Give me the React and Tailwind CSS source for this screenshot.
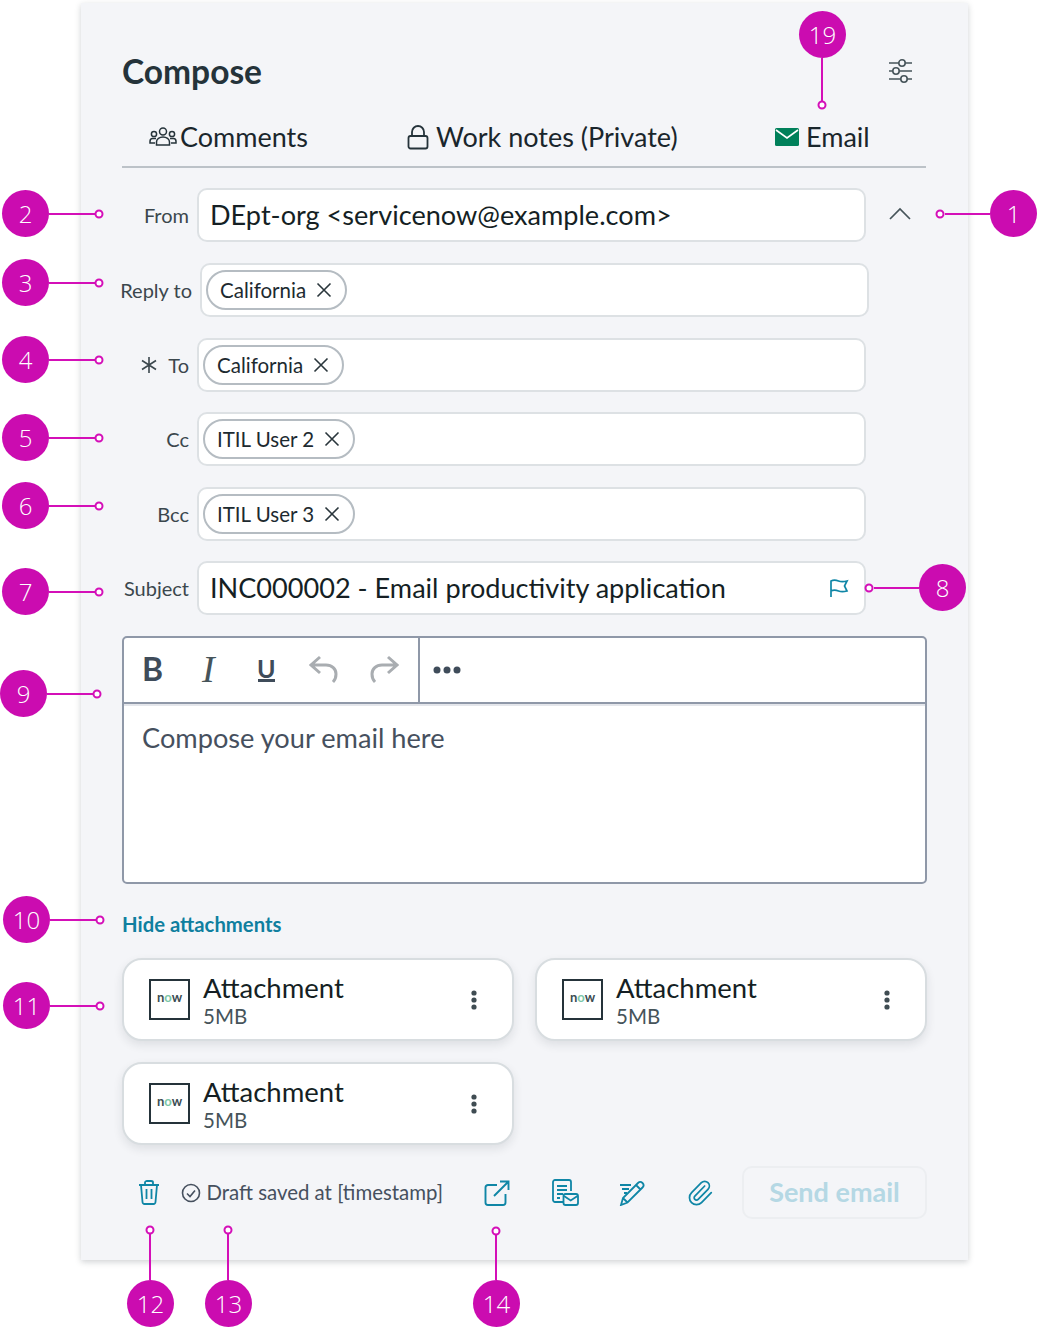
import React from 'react'

const pins = [
  { n: '1', cls: 'left-[990px] top-[190px]' },
  { n: '2', cls: 'left-[2px] top-[190px]' },
  { n: '3', cls: 'left-[2px] top-[259px]' },
  { n: '4', cls: 'left-[2px] top-[336px]' },
  { n: '5', cls: 'left-[2px] top-[414px]' },
  { n: '6', cls: 'left-[2px] top-[482px]' },
  { n: '7', cls: 'left-[2px] top-[568px]' },
  { n: '8', cls: 'left-[919px] top-[564px]' },
  { n: '9', cls: 'left-[0px] top-[670px]' },
  { n: '10', cls: 'left-[3px] top-[896px]' },
  { n: '11', cls: 'left-[3px] top-[982px]' },
  { n: '12', cls: 'left-[127px] top-[1280px]' },
  { n: '13', cls: 'left-[205px] top-[1280px]' },
  { n: '14', cls: 'left-[473px] top-[1280px]' },
  { n: '19', cls: 'left-[799px] top-[11px]' },
]

// leader lines from badge edge to the small ring
const leaders = [
  [990, 214, 945, 214, 940, 214],
  [49, 214, 95, 214, 99, 214],
  [49, 283, 95, 283, 99, 283],
  [49, 360, 95, 360, 99, 360],
  [49, 438, 95, 438, 99, 438],
  [49, 506, 95, 506, 99, 506],
  [49, 592, 95, 592, 99, 592],
  [919, 588, 874, 588, 869, 588],
  [47, 694, 93, 694, 97, 694],
  [50, 920, 96, 920, 100, 920],
  [50, 1006, 96, 1006, 100, 1006],
  [150, 1280, 150, 1234, 150, 1230],
  [228, 1280, 228, 1234, 228, 1230],
  [496, 1280, 496, 1235, 496, 1231],
  [822, 58, 822, 101, 822, 105],
]

function Annotations() {
  return (
    <>
      <svg className="absolute left-0 top-0" width="1038" height="1328" fill="none">
        {leaders.map((l, i) => (
          <g key={i} stroke="#d40fb8" strokeWidth="2">
            <line x1={l[0]} y1={l[1]} x2={l[2]} y2={l[3]} />
            <circle cx={l[4]} cy={l[5]} r="3.5" fill="#fff" />
          </g>
        ))}
      </svg>
      {pins.map(p => (
        <div key={p.n} className={`absolute ${p.cls} w-[47px] h-[47px] rounded-full bg-[#cb0cb0] text-white text-[24px] font-light font-['Open_Sans',sans-serif] flex items-center justify-center`}>
          {p.n}
        </div>
      ))}
    </>
  )
}

function X({ className }) {
  return (
    <svg className={className} width="16" height="16" viewBox="0 0 16 16" fill="none" stroke="#2a363c" strokeWidth="1.6">
      <path d="M1.5 1.5l13 13M14.5 1.5l-13 13" />
    </svg>
  )
}

function Chip({ text, className = '' }) {
  return (
    <div className={`h-[40px] ml-[4px] pl-[12px] pr-[13px] flex items-center gap-[10px] rounded-full border-2 border-[#b5bcc2] text-[20.5px] text-[#1d2a30] bg-white ${className}`}>
      <span>{text}</span>
      <X />
    </div>
  )
}

function Row({ label, children, className = '' }) {
  return (
    <div className={`flex items-center w-[744px] ${className}`}>
      <div className="w-[67px] shrink-0 flex justify-end items-center whitespace-nowrap text-[20px] text-[#3b474d]">{label}</div>
      <div className="ml-[8px] flex-1 h-[54px] bg-white rounded-[10px] border-2 border-[#dde1e4] flex items-center">
        {children}
      </div>
    </div>
  )
}

function Attachment() {
  return (
    <div className="w-[392px] h-[83px] bg-white rounded-[20px] border-2 border-[#d8dde0] shadow-[0_4px_10px_rgba(30,40,50,0.1)] flex items-center pl-[25px] pr-[35px]">
      <div className="w-[41px] h-[41px] shrink-0 border-2 border-[#25333a] bg-white flex items-center justify-center text-[13px] font-bold leading-none pb-[4px] text-[#3b4c52]">
        <span>n<span className="text-[#7cc7a8]">o</span>w</span>
      </div>
      <div className="ml-[13px] pt-[1px] flex-1 flex flex-col">
        <div className="text-[27.5px] leading-[32px] text-[#151f24]">Attachment</div>
        <div className="text-[20.5px] leading-[25px] text-[#46545a]">5MB</div>
      </div>
      <svg width="6" height="20" viewBox="0 0 6 20" fill="#3f4c52">
        <circle cx="3" cy="3" r="2.6" /><circle cx="3" cy="10" r="2.6" /><circle cx="3" cy="17" r="2.6" />
      </svg>
    </div>
  )
}

const teal = '#0f86a6'

export default function App() {
  return (
    <div className="relative w-[1038px] h-[1328px] bg-white overflow-hidden font-['Lato',sans-serif]">
      <div className="absolute left-[81px] top-[3px] w-[887px] h-[1257px] bg-[#f4f5f8] shadow-[0_2px_6px_rgba(40,50,60,0.22)]" />
      <div className="relative pl-[122px] w-[926px]">
        {/* header */}
        <div className="h-[106px] flex items-end justify-between pb-[15px]">
          <h1 className="text-[33.5px] leading-[40px] font-bold text-[#25333a]">Compose</h1>
          <svg className="mr-[14px] mb-[7px]" width="24" height="26" viewBox="0 0 24 26" fill="none" stroke="#46545a" strokeWidth="1.6">
            <path d="M1 5h23M1 13h23M1 21h23" />
            <circle cx="14" cy="5" r="3.2" fill="#f4f5f8" />
            <circle cx="8" cy="13" r="3.2" fill="#f4f5f8" />
            <circle cx="16" cy="21" r="3.2" fill="#f4f5f8" />
          </svg>
        </div>

        {/* tabs */}
        <div className="relative h-[62px] border-b-2 border-[#bcc2c8] text-[27px] text-[#1a262c]">
          <div className="absolute left-[27px] top-[11px] flex items-center gap-[3px]">
            <svg width="28" height="22" viewBox="0 0 28 22" fill="none" stroke="#25333a" strokeWidth="1.5">
              <circle cx="14" cy="5.5" r="3.5" />
              <circle cx="5" cy="8" r="2.6" />
              <circle cx="23" cy="8" r="2.6" />
              <path d="M7.5 19v-3c0-3 3-5 6.5-5s6.500 2 6.500 5v3z" />
              <path d="M7 12.500H3.500C2 12.500 1 14 1 15.500V17h5M21 12.500h3.500c1.500 0 2.500 1.500 2.500 3V17h-5" />
            </svg>
            <span>Comments</span>
          </div>
          <div className="absolute left-[285px] top-[11px] flex items-center gap-[7px]">
            <svg width="22" height="25" viewBox="0 0 22 25" fill="none" stroke="#25333a" strokeWidth="1.8">
              <rect x="1.500" y="11" width="19" height="12.500" rx="2" />
              <path d="M5 11V7a6 6 0 0 1 12 0v4" />
            </svg>
            <span>Work notes (Private)</span>
          </div>
          <div className="absolute left-[653px] top-[11px] flex items-center gap-[7px]">
            <svg width="24" height="18" viewBox="0 0 24 18">
              <rect width="24" height="18" rx="1.500" fill="#00805a" />
              <path d="M1 2l11 8 11-8" fill="none" stroke="#fff" strokeWidth="1.600" />
            </svg>
            <span>Email</span>
          </div>
        </div>

        {/* address fields */}
        <div className="relative mt-[20px]">
          <Row label="From">
            <span className="pl-[11px] text-[27.1px] text-[#151f24]">DEpt-org &lt;servicenow@example.com&gt;</span>
          </Row>
          <svg className="absolute left-[767px] top-[19px]" width="22" height="13" viewBox="0 0 22 13" fill="none" stroke="#46545a" strokeWidth="1.700">
            <path d="M1 12L11 2l10 10" />
          </svg>
        </div>
        <Row label="Reply to" className="mt-[21px] ml-[3px]"><Chip text="California" /></Row>
        <Row label={<><svg className="mr-[10px]" width="18" height="18" viewBox="0 0 18 18" fill="none" stroke="#3b474d" strokeWidth="1.600"><path d="M9 1v16M2 4.500l14 9M16 4.500l-14 9" /></svg>To</>} className="mt-[21px]">
          <Chip text="California" />
        </Row>
        <Row label="Cc" className="mt-[20px]"><Chip text="ITIL User 2" /></Row>
        <Row label="Bcc" className="mt-[21px]"><Chip text="ITIL User 3" /></Row>
        <Row label="Subject" className="mt-[20px]">
          <span className="pl-[11px] flex-1 text-[27.1px] text-[#151f24]">INC000002 - Email productivity application</span>
          <svg className="mr-[15px]" width="20" height="19" viewBox="0 0 20 19" fill="none" stroke={teal} strokeWidth="1.700">
            <path d="M2 18V2c3-1.500 5-1 7.500 0s5 1 8.500 0l-2.500 5 2.500 5c-3.500 1-6 1-8.500 0s-4.500-1.500-7.500 0" />
          </svg>
        </Row>

        {/* editor */}
        <div className="mt-[21px] w-[805px] h-[248px] bg-white rounded-[5px] border-2 border-[#8f98a8] flex flex-col">
          <div className="h-[66px] shrink-0 flex border-b-2 border-[#8f98a8] shadow-[0_2px_0_#e4e6eb]">
            <div className="w-[296px] border-r-2 border-[#8f98a8] flex items-center pl-[18px] pb-[2px]">
              <span className="w-[22px] text-[32px] font-bold leading-none text-[#3f4c5a]">B</span>
              <span className="ml-[38px] w-[18px] font-['Liberation_Serif',serif] italic text-[38px] leading-none text-[#46545a]">I</span>
              <div className="ml-[37px] flex flex-col items-center">
                <span className="text-[25px] font-bold leading-[22px] text-[#3f4c5a]">U</span>
                <div className="w-[17px] h-[3px] bg-[#3f4c5a]" />
              </div>
              <svg className="ml-[33px]" width="30" height="30" viewBox="0 0 30 30" fill="none" stroke="#a9adb1" strokeWidth="3">
                <path d="M11 3L2 11l9 8M2 11h15c6 0 10 4 10 9 0 3-1 6-3 8" />
              </svg>
              <svg className="ml-[30px]" width="30" height="30" viewBox="0 0 30 30" fill="none" stroke="#a9adb1" strokeWidth="3">
                <path d="M19 3l9 8-9 8M28 11H13C7 11 3 15 3 20c0 3 1 6 3 8" />
              </svg>
            </div>
            <div className="flex items-center pl-[13px] pb-[1px]">
              <svg width="28" height="8" viewBox="0 0 28 8" fill="#3f4c5a">
                <circle cx="4" cy="4" r="3.500" /><circle cx="14" cy="4" r="3.500" /><circle cx="24" cy="4" r="3.500" />
              </svg>
            </div>
          </div>
          <div className="pl-[18px] pt-[17px] text-[27.2px] leading-[34px] text-[#46505e]">Compose your email here</div>
        </div>

        <div className="mt-[27px] text-[20.3px] leading-[26px] font-bold text-[#0f7f9f]">Hide attachments</div>

        {/* attachments */}
        <div className="mt-[21px] grid grid-cols-[392px_392px] gap-x-[21px] gap-y-[21px]">
          <Attachment />
          <Attachment />
          <Attachment />
        </div>

        {/* footer */}
        <div className="mt-[21px] flex items-center h-[53px] w-[804px]">
          <svg className="ml-[16px] shrink-0" width="22" height="25" viewBox="0 0 22 25" fill="none" stroke={teal} strokeWidth="1.800">
            <path d="M1 5h20M7 5V2.500C7 1.500 8 1 9 1h4c1 0 2 .5 2 1.500V5M3 5l1.500 17c.1 1 1 2 2 2h9c1 0 1.900-1 2-2L19 5M8.500 9v10M13.500 9v10" />
          </svg>
          <svg className="ml-[21px] shrink-0" width="20" height="20" viewBox="0 0 20 20" fill="none" stroke="#46505e" strokeWidth="1.600">
            <circle cx="10" cy="10" r="8.500" />
            <path d="M6 10.500l3 3 5-6" />
          </svg>
          <span className="ml-[5.500px] w-[235.500px] shrink-0 whitespace-nowrap text-[20.4px] text-[#46505e]">Draft saved at [timestamp]</span>
          <svg className="ml-[42px] shrink-0" width="26" height="26" viewBox="0 0 26 26" fill="none" stroke={teal} strokeWidth="1.900">
            <path d="M13 5H4C2.500 5 1.500 6 1.500 7.500v15C1.500 24 2.500 25 4 25h15c1.500 0 2.500-1 2.500-2.500V14" />
            <path d="M10 16L24.500 1.500M16 1.500h8.500V10" />
          </svg>
          <svg className="ml-[42px] shrink-0" width="27" height="27" viewBox="0 0 27 27" fill="none" stroke={teal} strokeWidth="1.800">
            <path d="M12 23H3c-1 0-2-1-2-2V3c0-1 1-2 2-2h14c1 0 2 1 2 2v9" />
            <path d="M5 7h10M5 11h10M5 15h6M5 19h3" />
            <rect x="11.500" y="15" width="14.500" height="11" rx="2" fill="#f4f5f8" />
            <path d="M12 17l6.700 4.500L25.500 17" />
          </svg>
          <svg className="ml-[40px] shrink-0" width="26" height="26" viewBox="0 0 26 26" fill="none" stroke={teal} strokeWidth="1.800">
            <path d="M2 25l2-7L19 3c1.500-1.500 3-1.500 4.500 0s1.500 3 0 4.500L8.500 22.500zM4 18l4.500 4.500M17 5l4.500 4.500" />
            <path d="M1 5h11M3 9h7M5 13h3" />
          </svg>
          <svg className="ml-[41px] shrink-0" width="28" height="30" viewBox="0 0 24 24" fill="none" stroke={teal} strokeWidth="1.500" strokeLinecap="round" strokeLinejoin="round">
            <path d="m16 6-8.414 8.586a2 2 0 0 0 2.829 2.829l8.414-8.586a4 4 0 1 0-5.657-5.657l-8.379 8.551a6 6 0 1 0 8.485 8.485l8.379-8.551" />
          </svg>
          <div className="ml-[28px] w-[185px] shrink-0 h-[53px] rounded-[10px] border-2 border-[#eceef1] flex items-center justify-center text-[27px] font-bold text-[#b5d8e4]">
            Send email
          </div>
        </div>
      </div>
      <Annotations />
    </div>
  )
}
